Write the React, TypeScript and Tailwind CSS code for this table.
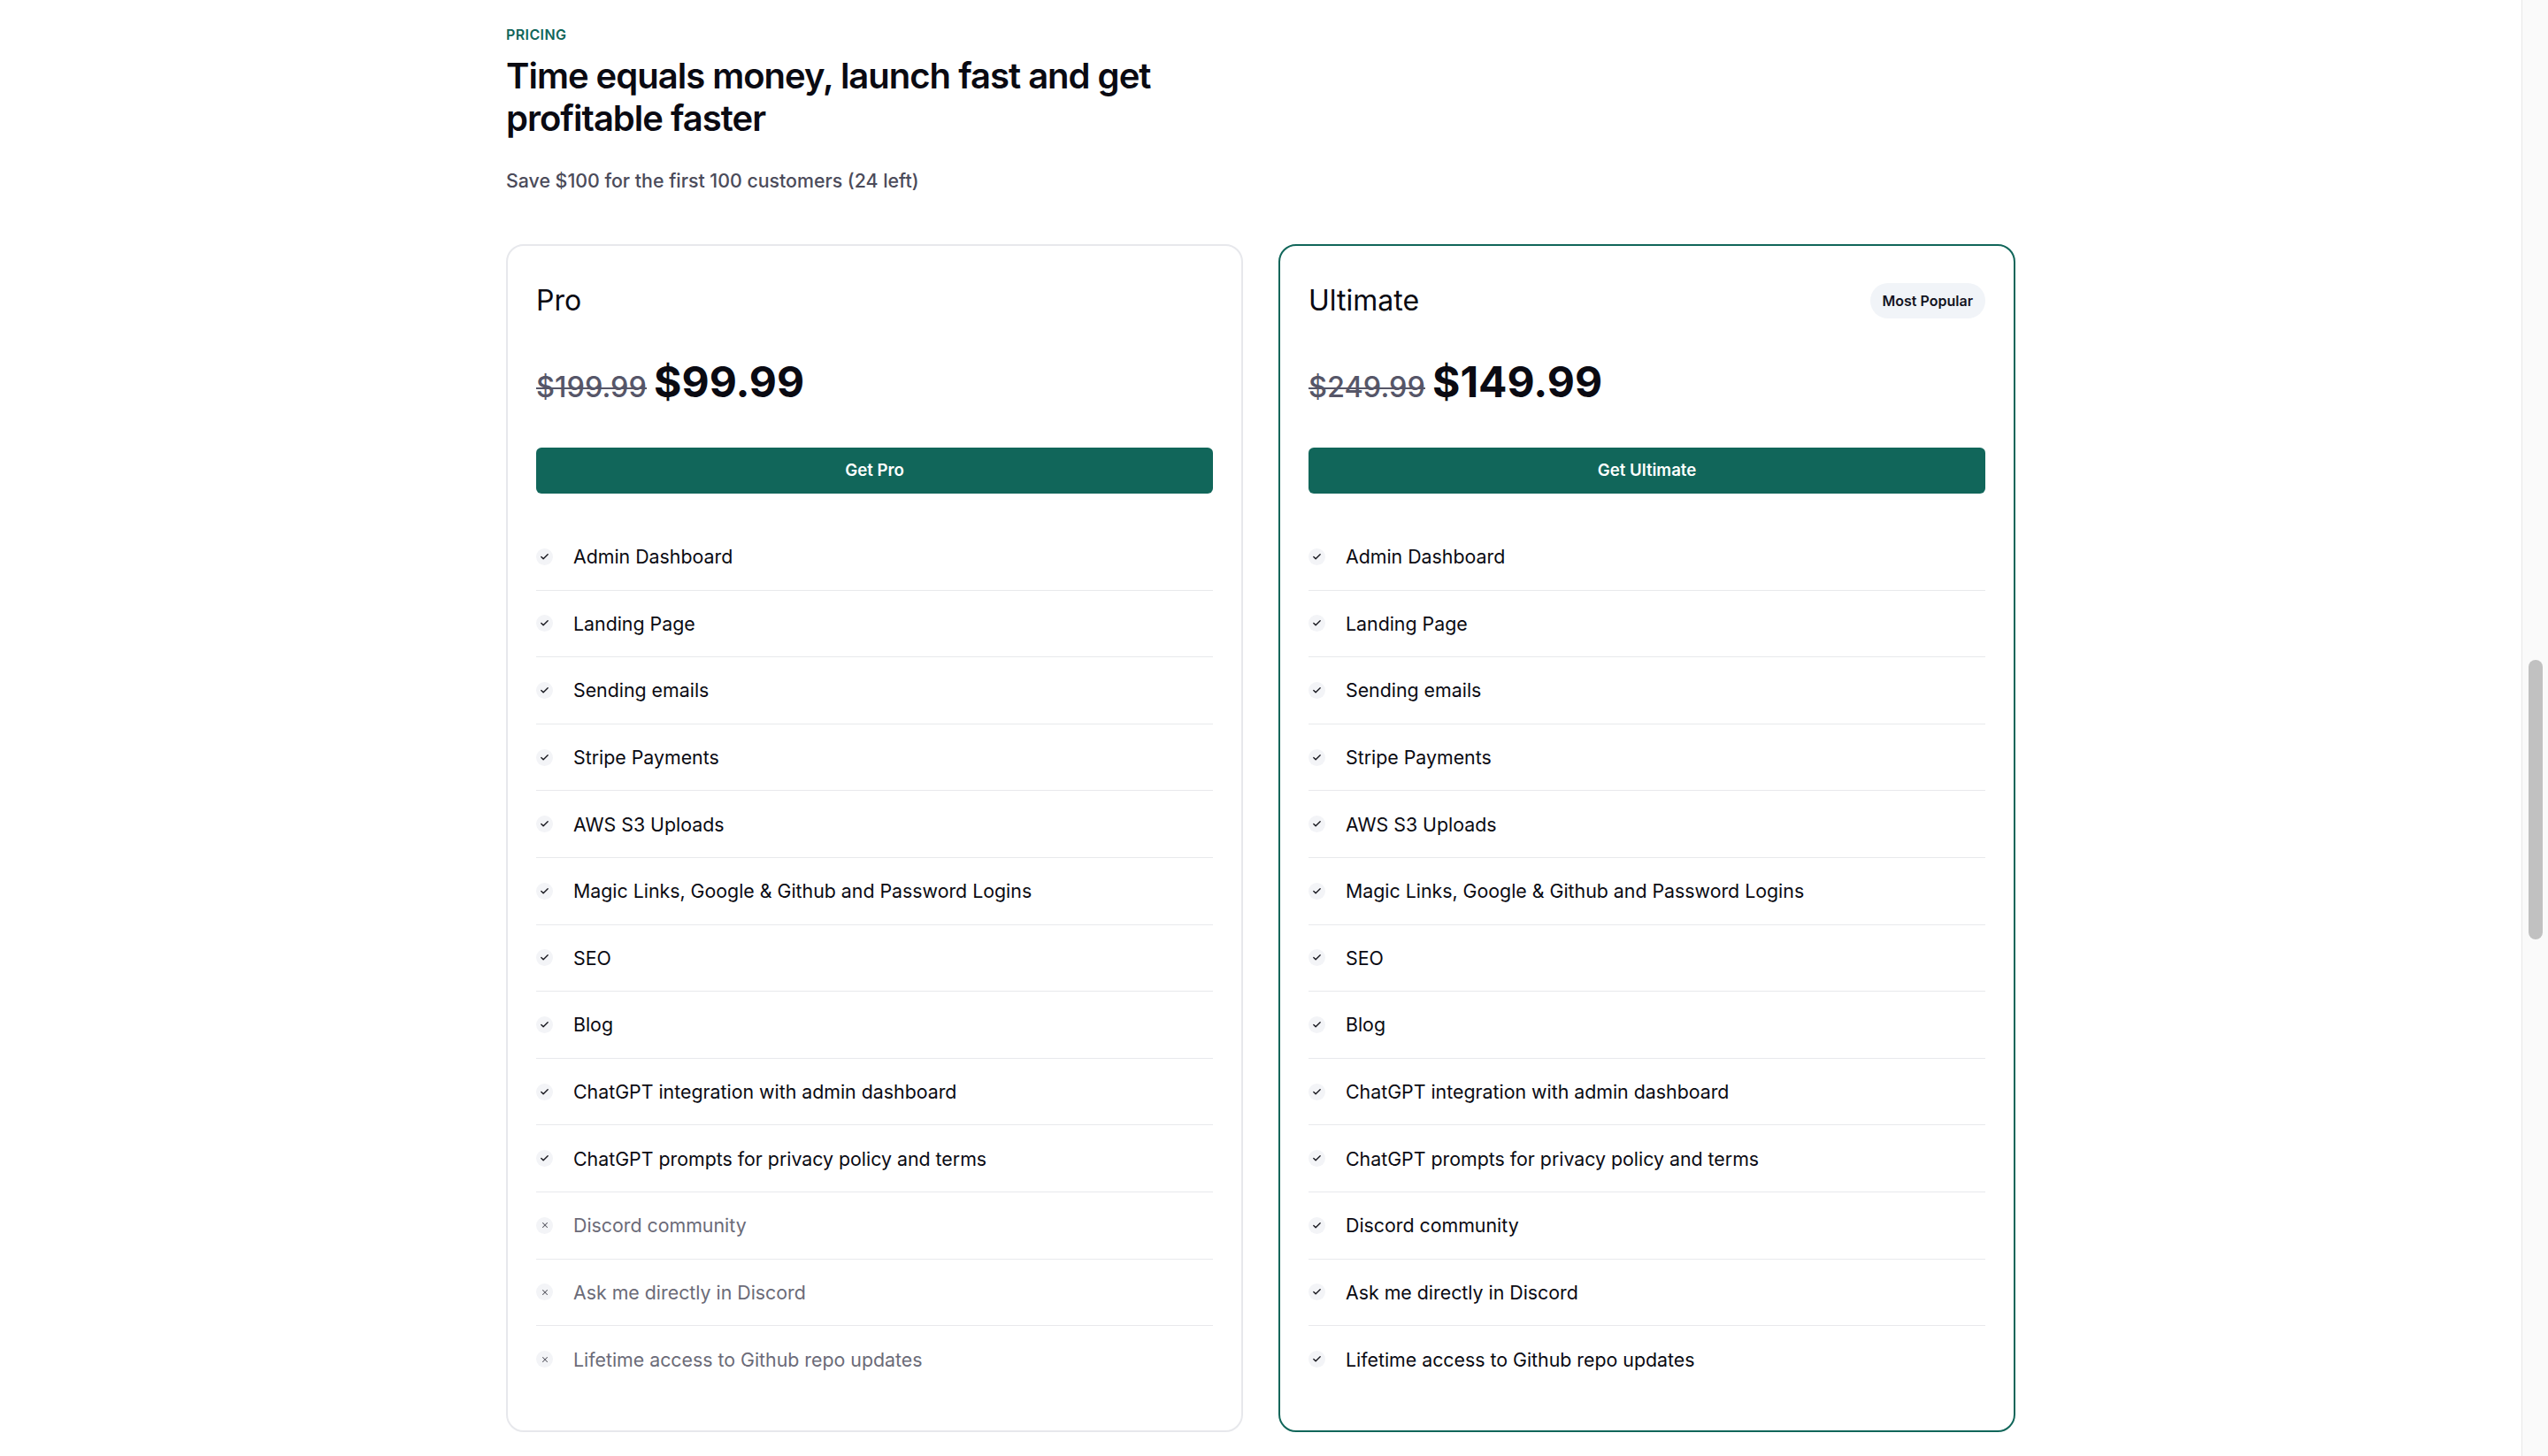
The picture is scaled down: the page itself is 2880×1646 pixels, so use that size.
import { Check, X } from "lucide-react";

type Plan = {
  name: string;
  oldPrice: string;
  price: string;
  cta: string;
  popular?: boolean;
  included: number;
};

const FEATURES = [
  "Admin Dashboard",
  "Landing Page",
  "Sending emails",
  "Stripe Payments",
  "AWS S3 Uploads",
  "Magic Links, Google & Github and Password Logins",
  "SEO",
  "Blog",
  "ChatGPT integration with admin dashboard",
  "ChatGPT prompts for privacy policy and terms",
  "Discord community",
  "Ask me directly in Discord",
  "Lifetime access to Github repo updates",
];

const PLANS: Plan[] = [
  { name: "Pro", oldPrice: "$199.99", price: "$99.99", cta: "Get Pro", included: 10 },
  { name: "Ultimate", oldPrice: "$249.99", price: "$149.99", cta: "Get Ultimate", popular: true, included: 13 },
];

export default function App() {
  return (
    <div className="flex h-[1646px] w-full overflow-hidden bg-white font-['Inter',sans-serif] text-[#0a0a12]">
      <main className="flex-1 overflow-hidden">
        <section className="mx-auto w-[1706px] pt-[29px]">
          <p className="text-[16px] leading-5 font-semibold uppercase tracking-wide text-[#11665a]">Pricing</p>
          <h2 className="mt-[13px] max-w-[780px] text-[40px] leading-[48px] font-semibold tracking-tight">
            Time equals money, launch fast and get profitable faster
          </h2>
          <p className="mt-[32px] text-[21.33px] leading-7 font-medium text-[#4b4b5a]">
            Save $100 for the first 100 customers (24 left)
          </p>

          <div className="mt-[58px] grid grid-cols-2 gap-10">
            {PLANS.map((p) => (
              <PlanCard key={p.name} plan={p} />
            ))}
          </div>
        </section>
      </main>

      {/* page scrollbar */}
      <div className="w-[30px] shrink-0 border-l border-[#e8e8e8] bg-[#fafafa] flex flex-col items-center">
        <div className="mt-[746px] h-[316px] w-4 rounded-full bg-[#c1c1c1]" />
      </div>
    </div>
  );
}

function PlanCard({ plan }: { plan: Plan }) {
  return (
    <article
      className={`rounded-[20px] border-2 px-[32px] pt-[42px] pb-[42px] ${
        plan.popular ? "border-[#11665a]" : "border-[#e7e8ec]"
      }`}
    >
      <div className="flex h-10 items-center justify-between">
        <h3 className="text-[32px] leading-9 font-normal">{plan.name}</h3>
        {plan.popular && (
          <span className="rounded-full bg-[#f1f4f8] px-[14px] py-[9px] text-[16px] leading-[22px] font-semibold text-[#14141f]">
            Most Popular
          </span>
        )}
      </div>

      <div className="mt-[48px] flex items-baseline gap-[8px]">
        <span className="text-[32.5px] leading-none font-medium text-[#565668] line-through decoration-2">
          {plan.oldPrice}
        </span>
        <span className="text-[48px] leading-none font-bold">{plan.price}</span>
      </div>

      <button className="mt-[50px] flex h-[52px] w-full items-center justify-center rounded-md bg-[#11665a] text-[18.67px] font-semibold text-white">
        {plan.cta}
      </button>

      <ul className="mt-[34px]">
        {FEATURES.map((f, i) => {
          const ok = i < plan.included;
          return (
            <li
              key={f}
              className={`flex h-[75.6px] items-center gap-[23px] ${
                i < FEATURES.length - 1 ? "border-b border-[#e8e9ec]" : ""
              }`}
            >
              <span className="flex h-[19px] w-[19px] shrink-0 items-center justify-center rounded-full bg-[#f3f4f7]">
                {ok ? (
                  <Check className="h-[11px] w-[11px] text-[#18181f]" strokeWidth={3} />
                ) : (
                  <X className="h-[10px] w-[10px] text-[#55555f]" strokeWidth={2.5} />
                )}
              </span>
              <span className={`text-[21.33px] leading-7 ${ok ? "text-[#0a0a12]" : "text-[#6b6b78]"}`}>{f}</span>
            </li>
          );
        })}
      </ul>
    </article>
  );
}
